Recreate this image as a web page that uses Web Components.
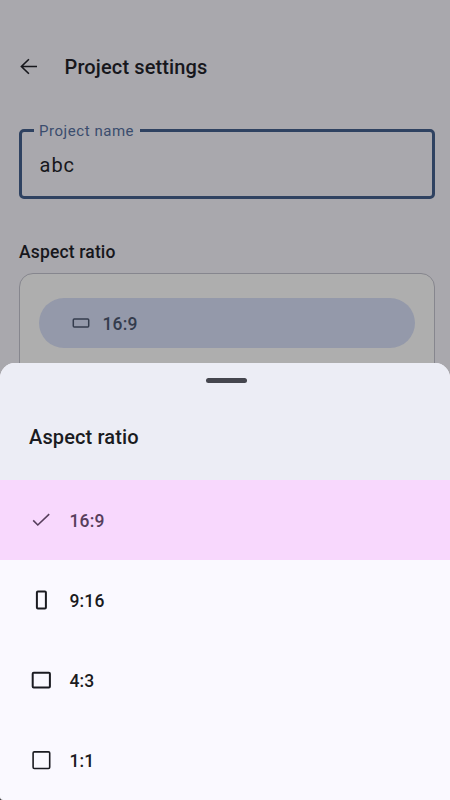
<!DOCTYPE html>
<html lang="en">
<head>
<meta charset="utf-8">
<title>Project settings</title>
<style>
html,body{margin:0;height:100%;overflow:hidden}
body{font-family:Roboto,"Liberation Sans",sans-serif;background:#a9a8ad}
</style>
</head>
<body>
<settings-app></settings-app>
<script>
const icons = {
  back: '<path d="M20 11.5H4.2M11.9 4.2L4.4 11.5l7.5 7.3" fill="none" stroke="currentColor" stroke-width="1.6"/>',
  check: '<path d="M4.2 12.4l4.6 4.6L20.2 6.2" fill="none" stroke="currentColor" stroke-width="1.6"/>',
  wide: '<rect x="4.3" y="7.9" width="15.4" height="8" rx="1" fill="none" stroke="currentColor" stroke-width="1.5"/>',
  tall: '<rect x="7.9" y="3.5" width="9" height="17" rx="1" fill="none" stroke="currentColor" stroke-width="2"/>',
  landscape: '<rect x="3.7" y="4.7" width="17.2" height="14.8" rx="1" fill="none" stroke="currentColor" stroke-width="2"/>',
  square: '<rect x="4.1" y="3.9" width="16.6" height="16.6" rx="1.2" fill="none" stroke="currentColor" stroke-width="1.6"/>'
};
function define(name, html, setup) {
  const template = document.createElement('template');
  template.innerHTML = html;
  customElements.define(name, class extends HTMLElement {
    constructor() {
      super();
      this.attachShadow({mode: 'open'}).append(template.content.cloneNode(true));
    }
    connectedCallback() { if (setup) setup(this); }
  });
}

define('ui-icon', `<style>:host{display:block;flex:none;width:24px;height:24px}svg{display:block;width:100%;height:100%}</style><svg viewBox="0 0 24 24"></svg>`,
  el => { el.shadowRoot.querySelector('svg').innerHTML = icons[el.getAttribute('name')]; });

define('top-bar', `<style>
:host{display:flex;align-items:center;gap:23.5px;height:30px;padding:52px 0 0 17px;color:#17171c}
h1{margin:0;font-size:20px;font-weight:500;line-height:30px;letter-spacing:.13px}
</style><ui-icon name="back"></ui-icon><h1><slot></slot></h1>`);

define('outlined-field', `<style>
:host{display:block;margin:40px 15.5px 0 18.5px}
fieldset{box-sizing:border-box;margin:0;padding:0 18px 0 12px;height:77px;min-width:0;border:3px solid #2f4261;border-radius:5px}
legend{padding:2px 5.5px 0 5.5px;font-size:15px;line-height:15px;letter-spacing:.55px;color:#3b4d6d}
.v{padding:14px 0 0 6px;font-size:20px;line-height:24px;letter-spacing:1px;color:#17171c}
</style><fieldset><legend><slot name="label"></slot></legend><div class="v"><slot></slot></div></fieldset>`);

define('section-title', `<style>:host{display:block;margin:41px 0 0 19px;font-size:17.5px;font-weight:500;line-height:24px;letter-spacing:.16px;color:#17171c}</style><slot></slot>`);

define('settings-card', `<style>:host{display:block;box-sizing:border-box;margin:9px 15.5px 0 19px;padding:24px 19px;height:180px;border:1px solid #86868e;border-radius:14px;background:#aeaeae}</style><slot></slot>`);

define('ratio-pill', `<style>:host{display:flex;align-items:center;gap:9.5px;box-sizing:border-box;height:50px;padding-left:30px;border-radius:25px;background:#9499aa;color:#343c4d;font-size:17.5px;font-weight:500;letter-spacing:.15px}span{padding-top:2px}</style><ui-icon name="wide"></ui-icon><span><slot></slot></span>`);

define('bottom-sheet', `<style>
:host{display:flex;flex-direction:column;overflow:hidden;border-radius:15px 15px 0 3px;background:#faf9ff;color:#1a1b21}
header{display:flex;flex-direction:column;align-items:center;height:117px;background:#ecedf5}
.grip{width:41px;height:5px;margin:15px 0 0 2px;border-radius:3px;background:#45464e}
h2{align-self:stretch;margin:39px 0 0 29px;font-size:20px;font-weight:500;line-height:30px;letter-spacing:.13px}
</style><header><div class="grip"></div><h2><slot name="title"></slot></h2></header><slot></slot>`);

define('ratio-option', `<style>
:host{display:flex;align-items:center;gap:16.5px;box-sizing:border-box;flex:none;height:80px;padding:0 0 0 29px;font-size:17.5px;font-weight:500;letter-spacing:.15px}
:host([selected]){background:#f8d8fd;color:#573e5c}
span{padding-top:2px}
</style><ui-icon></ui-icon><span><slot></slot></span>`,
  el => { const i = el.shadowRoot.querySelector('ui-icon'); i.setAttribute('name', el.getAttribute('icon')); i.shadowRoot.querySelector('svg').innerHTML = icons[el.getAttribute('icon')]; });

define('settings-app', `<style>
:host{display:block;position:relative;width:450px;height:800px;overflow:hidden;background:#a9a8ad}
bottom-sheet{position:absolute;left:0;right:0;bottom:0;height:437px}
.corner{position:absolute;left:0;bottom:0;width:6px;height:6px;background:#333}
</style>
<top-bar>Project settings</top-bar>
<outlined-field><span slot="label">Project name</span>abc</outlined-field>
<section-title>Aspect ratio</section-title>
<settings-card><ratio-pill>16:9</ratio-pill></settings-card>
<div class="corner"></div>
<bottom-sheet><span slot="title">Aspect ratio</span>
<ratio-option icon="check" selected>16:9</ratio-option>
<ratio-option icon="tall">9:16</ratio-option>
<ratio-option icon="landscape">4:3</ratio-option>
<ratio-option icon="square">1:1</ratio-option>
</bottom-sheet>`);
</script>
</body>
</html>
